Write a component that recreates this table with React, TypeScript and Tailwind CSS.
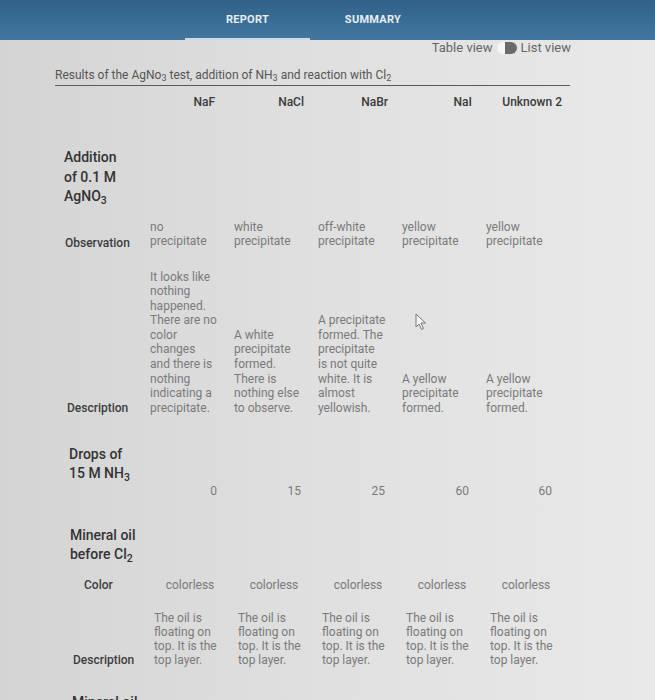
import React from "react";

const heads = ["NaF", "NaCl", "NaBr", "NaI", "Unknown 2"];

const obs = [
  ["no", "precipitate"],
  ["white", "precipitate"],
  ["off-white", "precipitate"],
  ["yellow", "precipitate"],
  ["yellow", "precipitate"],
];

const desc1 = [
  ["It looks like", "nothing", "happened.", "There are no", "color", "changes", "and there is", "nothing", "indicating a", "precipitate."],
  ["A white", "precipitate", "formed.", "There is", "nothing else", "to observe."],
  ["A precipitate", "formed. The", "precipitate", "is not quite", "white. It is", "almost", "yellowish."],
  ["A yellow", "precipitate", "formed."],
  ["A yellow", "precipitate", "formed."],
];

const drops = ["0", "15", "25", "60", "60"];

const oil = ["The oil is", "floating on", "top. It is the", "top layer."];

function Lines({ lines, lh }: { lines: string[]; lh: string }) {
  return (
    <div className={lh}>
      {lines.map((l, i) => (
        <div key={i} className="whitespace-nowrap">
          {l}
        </div>
      ))}
    </div>
  );
}

const grid = "grid grid-cols-[86px_repeat(5,84px)] ml-[62px] items-end";

export default function App() {
  return (
    <div
      className="relative w-[655px] min-h-[700px] overflow-hidden bg-linear-to-r from-[#d4d4d4] via-[#e0e0e0] to-[#e9e9e9] text-[#444]"
      style={{ fontFamily: "Roboto, 'Liberation Sans', sans-serif" }}
    >
      {/* Header */}
      <div className="h-10 bg-linear-to-b from-[#2f6189] to-[#4477a0] flex items-end">
        <div className="ml-[185px] w-[125px] h-10 flex flex-col items-center justify-end">
          <div className="text-[11px] font-bold tracking-wide text-[#e6edf3] mb-[10px]">REPORT</div>
          <div className="w-full h-[2px] bg-[#c8dbe9]" />
        </div>
        <div className="ml-[23px] w-[80px] h-10 flex items-start justify-center pt-[12px]">
          <div className="text-[11px] font-bold tracking-wide text-[#e6edf3]">SUMMARY</div>
        </div>
      </div>

      {/* toggle */}
      <div className="flex items-center justify-end pr-[84px] h-[16px] text-[13px] text-[#666]">
        <span>Table view</span>
        <span className="ml-[4px] relative w-[20px] h-[12px] rounded-full bg-[#f6f6f6]">
          <span className="absolute right-0 top-0 w-[12px] h-[12px] rounded-r-full rounded-l-[3px] bg-[#6a6a6a]" />
        </span>
        <span className="ml-[4px]">List view</span>
      </div>

      {/* Title */}
      <div className="ml-[55px] w-[515px] mt-[11px] border-b border-[#5a5a5a] pb-[2px]">
        <div className="text-[12px] leading-[16px] text-[#555]">
          Results of the AgNo<sub>3</sub> test, addition of NH<sub>3</sub> and reaction with Cl<sub>2</sub>
        </div>
      </div>

      {/* column headers */}
      <div className={grid + " mt-[8px] text-[12px] leading-[16px] font-medium text-[#3a3a3a]"}>
        <div />
        {heads.map((h, i) => (
          <div key={h} className={"text-right " + (i === 0 ? "pr-[17px]" : i === 4 ? "pr-[6px]" : "pr-[12px]")}>
            {h}
          </div>
        ))}
      </div>

      {/* Addition section */}
      <div className="ml-[64px] mt-[38px] text-[14px] leading-[19.5px] font-medium text-[#333]">
        <div>Addition</div>
        <div>of 0.1 M</div>
        <div>
          AgNO<sub>3</sub>
        </div>
      </div>

      <div className={grid + " mt-[13px] text-[12px]"}>
        <div className="pl-[3px] font-medium text-[#3d3d3d] leading-[14px] translate-y-[2px]">Observation</div>
        {obs.map((o, i) => (
          <div key={i} className="pl-[2px] text-[#7a7a7a]">
            <Lines lines={o} lh="leading-[14px]" />
          </div>
        ))}
      </div>

      <div className={grid + " mt-[22px] text-[12px]"}>
        <div className="pl-[5px] font-medium text-[#3d3d3d] leading-[14.6px]">Description</div>
        {desc1.map((o, i) => (
          <div key={i} className="pl-[2px] text-[#7a7a7a]">
            <Lines lines={o} lh="leading-[14.6px]" />
          </div>
        ))}
      </div>

      {/* Drops */}
      <div className="ml-[69px] mt-[30px] text-[14px] leading-[18.5px] font-medium text-[#333]">
        <div>Drops of</div>
        <div>
          15 M NH<sub>3</sub>
        </div>
      </div>

      <div className={grid + " mt-[2px] text-[12px] leading-[14px]"}>
        <div />
        {drops.map((d, i) => (
          <div key={i} className={"text-right text-[#7a7a7a] " + (i === 4 ? "pr-[16px]" : "pr-[15px]")}>
            {d}
          </div>
        ))}
      </div>

      {/* Mineral oil before */}
      <div className="ml-[70px] mt-[28px] text-[14px] leading-[19px] font-medium text-[#333]">
        <div>Mineral oil</div>
        <div>
          before Cl<sub>2</sub>
        </div>
      </div>

      <div className={grid + " mt-[14px] text-[12px] leading-[14px]"}>
        <div className="pl-[22px] font-medium text-[#3d3d3d]">Color</div>
        {heads.map((_, i) => (
          <div key={i} className="text-center text-[#7a7a7a]">
            colorless
          </div>
        ))}
      </div>

      <div className={grid + " mt-[19px] text-[12px]"}>
        <div className="pl-[11px] font-medium text-[#3d3d3d] leading-[14px]">Description</div>
        {heads.map((_, i) => (
          <div key={i} className="pl-[6px] text-[#7a7a7a]">
            <Lines lines={oil} lh="leading-[14px]" />
          </div>
        ))}
      </div>

      <div className="ml-[72px] mt-[26px] text-[14px] leading-[19px] font-medium text-[#333]">
        <div>Mineral oil</div>
        <div>
          after Cl<sub>2</sub>
        </div>
      </div>

      {/* mouse cursor */}
      <svg className="absolute left-[415px] top-[313px]" width="12" height="18" viewBox="0 0 12 18">
        <path d="M1 1 L1 14 L4 11 L6.5 16.5 L8.5 15.5 L6 10 L10.5 10 Z" fill="#f4f4f4" stroke="#777" strokeWidth="1" />
      </svg>
    </div>
  );
}
